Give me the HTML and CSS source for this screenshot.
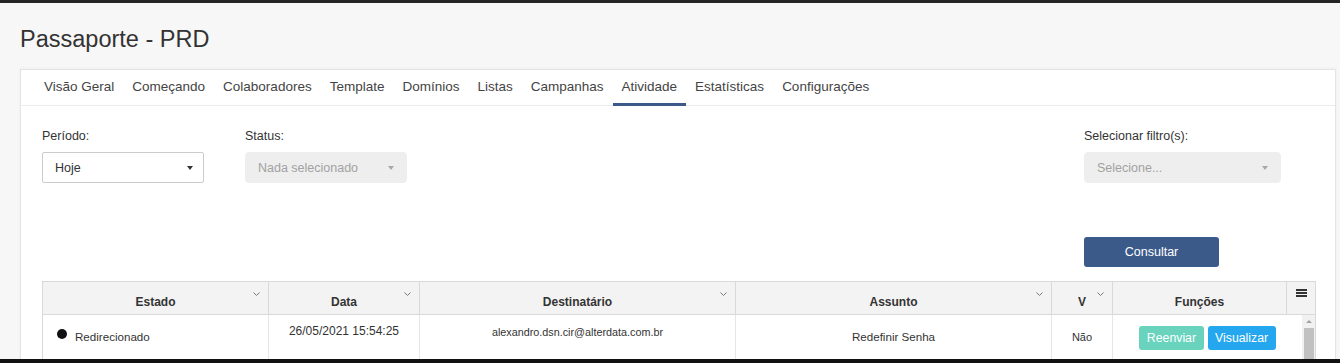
FILE: index.html
```html
<!DOCTYPE html>
<html lang="pt-BR">
<head>
    <meta charset="UTF-8">
    <meta name="viewport" content="width=device-width, initial-scale=1.0">
    <title>Passaporte - PRD</title>
    <link rel="stylesheet" href="styles.css">
</head>
<body>
    <div class="page-header">
        <h1 class="page-title">Passaporte - PRD</h1>
    </div>

    <div class="card">
        <!-- Abas do passaporte -->
        <nav class="tabs">
            <a class="tab">Visão Geral</a>
            <a class="tab">Começando</a>
            <a class="tab">Colaboradores</a>
            <a class="tab">Template</a>
            <a class="tab">Domínios</a>
            <a class="tab">Listas</a>
            <a class="tab">Campanhas</a>
            <a class="tab active">Atividade</a>
            <a class="tab">Estatísticas</a>
            <a class="tab">Configurações</a>
        </nav>

        <!-- Filtros -->
        <div class="filters">
            <div class="field">
                <label class="field-label">Período:</label>
                <div class="select">
                    <span>Hoje</span>
                    <span class="caret"></span>
                </div>
            </div>
            <div class="field">
                <label class="field-label">Status:</label>
                <div class="select disabled">
                    <span>Nada selecionado</span>
                    <span class="caret"></span>
                </div>
            </div>
            <div class="field field-right">
                <label class="field-label">Selecionar filtro(s):</label>
                <div class="select disabled">
                    <span>Selecione...</span>
                    <span class="caret"></span>
                </div>
            </div>
            <button class="btn-consultar">Consultar</button>
        </div>

        <!-- Tabela de atividades -->
        <div class="grid">
            <div class="grid-header">
                <div class="hcell"><span class="htext">Estado</span><span class="chev"><svg width="7" height="4" viewBox="0 0 7 4"><polyline points="0.5,0.5 3.5,3.5 6.5,0.5" fill="none" stroke="#777" stroke-width="1"/></svg></span></div>
                <div class="hcell"><span class="htext">Data</span><span class="chev"><svg width="7" height="4" viewBox="0 0 7 4"><polyline points="0.5,0.5 3.5,3.5 6.5,0.5" fill="none" stroke="#777" stroke-width="1"/></svg></span></div>
                <div class="hcell"><span class="htext">Destinatário</span><span class="chev"><svg width="7" height="4" viewBox="0 0 7 4"><polyline points="0.5,0.5 3.5,3.5 6.5,0.5" fill="none" stroke="#777" stroke-width="1"/></svg></span></div>
                <div class="hcell"><span class="htext">Assunto</span><span class="chev"><svg width="7" height="4" viewBox="0 0 7 4"><polyline points="0.5,0.5 3.5,3.5 6.5,0.5" fill="none" stroke="#777" stroke-width="1"/></svg></span></div>
                <div class="hcell"><span class="htext">V</span><span class="chev"><svg width="7" height="4" viewBox="0 0 7 4"><polyline points="0.5,0.5 3.5,3.5 6.5,0.5" fill="none" stroke="#777" stroke-width="1"/></svg></span></div>
                <div class="hcell"><span class="htext">Funções</span></div>
                <div class="hcell hmenu">
                    <svg width="11" height="8" viewBox="0 0 11 8"><rect x="0" y="0" width="11" height="2" fill="#333"/><rect x="0" y="3" width="11" height="2" fill="#333"/><rect x="0" y="6" width="11" height="2" fill="#333"/></svg>
                </div>
            </div>

            <div class="grid-body">
                <div class="cell cell-estado">
                    <span class="dot"></span>
                    <span>Redirecionado</span>
                </div>
                <div class="cell cell-top cell-data">26/05/2021 15:54:25</div>
                <div class="cell cell-top cell-email">alexandro.dsn.cir@alterdata.com.br</div>
                <div class="cell">Redefinir Senha</div>
                <div class="cell cell-small">Não</div>
                <div class="cell cell-funcoes">
                    <button class="btn btn-reenviar" disabled>Reenviar</button>
                    <button class="btn btn-visualizar">Visualizar</button>
                </div>
                <div class="scrollbar">
                    <span class="scroll-arrow"></span>
                    <span class="scroll-thumb"></span>
                </div>
            </div>
        </div>
    </div>

    <div class="screen-edge"></div>
</body>
</html>
```

FILE: styles.css
```css
:root {
    --background-color: #f7f7f7;
    --text-color: #333;
    --tab-color: #444;
    --accent-color: #3b5a8a;
    --border-color: #d9d9d9;
    --cell-border: #e6e6e6;
    --header-bg: #f3f3f3;
}

html {
    overflow: hidden;
}

body {
    margin: 0;
    padding: 0;
    font-family: 'Liberation Sans', Arial, sans-serif;
    background-color: var(--background-color);
    color: var(--text-color);
    border-top: 3px solid #252525;
}

.page-header {
    padding: 23px 20px 17px;
}

.page-title {
    margin: 0;
    font-size: 23.5px;
    line-height: 26px;
    font-weight: 400;
    color: #333;
}

.card {
    margin: 0 4px 0 20px;
    background-color: #fff;
    border: 1px solid #e4e4e4;
    box-shadow: 0 -1px 3px rgba(0, 0, 0, 0.04);
    min-height: 400px;
}

/* Abas */
.tabs {
    display: flex;
    padding-left: 14px;
    border-bottom: 1px solid #ebebeb;
}

.tab {
    display: block;
    padding: 9px 9px 8px;
    font-size: 13.5px;
    line-height: 16px;
    color: var(--tab-color);
    border-bottom: 3px solid transparent;
    margin-bottom: -1px;
    cursor: pointer;
}

.tab.active {
    border-bottom-color: var(--accent-color);
}

/* Filtros */
.filters {
    display: grid;
    grid-template-columns: 162px 162px 1fr 197px;
    column-gap: 41px;
    padding: 23px 54px 0 21px;
}

.field-label {
    display: block;
    font-size: 12.5px;
    line-height: 15px;
    margin-bottom: 8px;
}

.field-right {
    grid-column: 4;
}

.select {
    display: flex;
    align-items: center;
    justify-content: space-between;
    height: 31px;
    box-sizing: border-box;
    padding: 0 10px 0 12px;
    font-size: 12.5px;
    color: #333;
    background-color: #fff;
    border: 1px solid #ccc;
    border-radius: 2px;
}

.select.disabled {
    background-color: #eee;
    border-color: #eee;
    color: #a2a2a2;
    border-radius: 4px;
    padding-right: 12px;
}

.caret {
    width: 0;
    height: 0;
    border-top: 4px solid #333;
    border-left: 3.5px solid transparent;
    border-right: 3.5px solid transparent;
}

.select.disabled .caret {
    border-top-color: #a8a8a8;
}

.btn-consultar {
    grid-row: 2;
    grid-column: 4;
    margin-top: 54px;
    width: 135px;
    height: 30px;
    font-family: inherit;
    font-size: 12.5px;
    color: #fff;
    background-color: var(--accent-color);
    border: none;
    border-radius: 3px;
    cursor: pointer;
}

/* Tabela */
.grid {
    margin: 14px 19px 0 21px;
    border: 1px solid var(--border-color);
    border-bottom: none;
}

.grid-header,
.grid-body {
    display: grid;
    grid-template-columns: 226px 151px 316px 316px 61px 174px 1fr;
}

.grid-body {
    grid-template-columns: 226px 151px 316px 316px 61px 189px 1fr;
    height: 60px;
}

.grid-header {
    background-color: var(--header-bg);
    border-bottom: 1px solid var(--border-color);
    height: 32px;
}

.hcell {
    display: grid;
    grid-template-columns: 1fr auto 1fr;
    align-items: start;
    padding: 10px 8px 0;
    border-right: 1px solid var(--border-color);
}

.htext {
    grid-column: 2;
    margin-top: 3px;
    font-size: 12px;
    line-height: 14px;
    font-weight: 700;
    color: #333;
}

.chev {
    grid-column: 3;
    justify-self: end;
    display: flex;
}

.hmenu {
    display: flex;
    justify-content: center;
    padding: 7px 0 0;
    border-right: none;
}

.cell {
    display: flex;
    align-items: center;
    justify-content: center;
    height: 44px;
    box-sizing: border-box;
    border-right: 1px solid var(--cell-border);
    font-size: 11.6px;
    line-height: 14px;
    color: #333;
}

.cell-estado {
    justify-content: flex-start;
    padding-left: 14px;
}

.dot {
    width: 10px;
    height: 10px;
    border-radius: 50%;
    background-color: #111;
    margin-right: 8px;
    margin-bottom: 6px;
}

.cell-top {
    align-items: flex-start;
}

.cell-data {
    padding-top: 9px;
    font-size: 12px;
}

.cell-email {
    padding-top: 10px;
    font-size: 10.8px;
}

.cell-small {
    font-size: 11px;
}

.cell-funcoes {
    gap: 4px;
    padding-top: 2px;
    border-right: none;
}

.btn {
    height: 24px;
    padding: 0 7.5px;
    font-family: inherit;
    font-size: 12.3px;
    color: #fff;
    border: none;
    border-radius: 3px;
}

.btn-reenviar {
    background-color: #1abc9c;
    opacity: 0.65;
}

.btn-visualizar {
    background-color: #24a7ee;
}

.scrollbar {
    display: flex;
    flex-direction: column;
    align-items: center;
    background-color: #f1f1f1;
}

.scroll-arrow {
    margin-top: 5px;
    width: 0;
    height: 0;
    border-bottom: 3px solid #a3a3a3;
    border-left: 3px solid transparent;
    border-right: 3px solid transparent;
}

.scroll-thumb {
    margin-top: 5px;
    width: 10px;
    flex: 1;
    background-color: #c1c1c1;
}

/* Borda inferior da janela */
.screen-edge {
    position: fixed;
    left: 0;
    right: 0;
    bottom: 0;
    height: 4px;
    background-color: #111;
}
```
